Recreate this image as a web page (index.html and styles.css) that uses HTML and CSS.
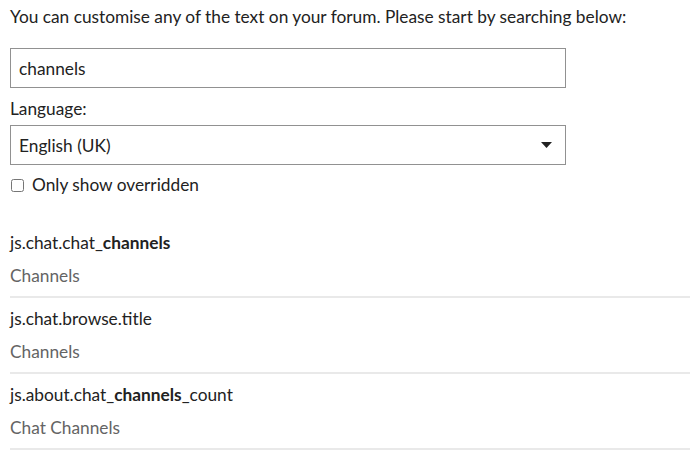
FILE: index.html
```html
<!DOCTYPE html>
<html lang="en">
<head>
    <meta charset="UTF-8">
    <meta name="viewport" content="width=device-width, initial-scale=1.0">
    <title>Customise Text</title>
    <link rel="stylesheet" href="styles.css">
</head>
<body>
    <p class="intro">You can customise any of the text on your forum. Please start by searching below:</p>
    <input class="search" type="text" value="channels">
    <label class="lang-label">Language:</label>
    <div class="select">
        <span>English (UK)</span>
        <svg class="caret" width="11" height="6" viewBox="0 0 11 6"><path d="M0 0h11L5.5 6z" fill="#222"/></svg>
    </div>
    <label class="overridden">
        <input type="checkbox">
        <span>Only show overridden</span>
    </label>
    <div class="results">
        <div class="row">
            <div class="key">js.chat.chat_<b>channels</b></div>
            <div class="value">Channels</div>
        </div>
        <div class="row">
            <div class="key">js.chat.browse.title</div>
            <div class="value">Channels</div>
        </div>
        <div class="row">
            <div class="key">js.about.chat_<b>channels</b>_count</div>
            <div class="value">Chat Channels</div>
        </div>
    </div>
</body>
</html>
```

FILE: styles.css
```css
body {
    font-family: Lato, 'Liberation Sans', sans-serif;
    font-size: 17.3px;
    color: #222;
    margin: 0;
    padding: 0 0 0 10px;
    background: #fff;
}
.intro {
    margin: 5px 0 19px;
    line-height: 24px;
}
.search {
    display: block;
    box-sizing: border-box;
    width: 556px;
    height: 40px;
    margin: 0;
    padding: 0 8px;
    border: 1px solid #919191;
    border-radius: 0;
    font-family: inherit;
    font-size: 17.3px;
    color: #222;
    outline: none;
}
.lang-label {
    display: block;
    margin: 9px 0 4px;
    line-height: 24px;
}
.select {
    display: flex;
    align-items: center;
    justify-content: space-between;
    box-sizing: border-box;
    width: 556px;
    height: 40px;
    padding: 0 13px 0 8px;
    border: 1px solid #919191;
}
.overridden {
    display: flex;
    align-items: center;
    gap: 8px;
    margin-top: 8px;
    line-height: 24px;
}
.overridden input {
    margin: 0 0 0 1px;
    width: 13px;
    height: 13px;
}
.results {
    margin-top: 25px;
}
.row {
    padding: 9px 0 8px;
    border-bottom: 2px solid #e9e9e9;
}
.key {
    line-height: 24px;
    margin-bottom: 9px;
}
.key b {
    font-weight: 700;
}
.value {
    line-height: 24px;
    color: #646464;
}
```
